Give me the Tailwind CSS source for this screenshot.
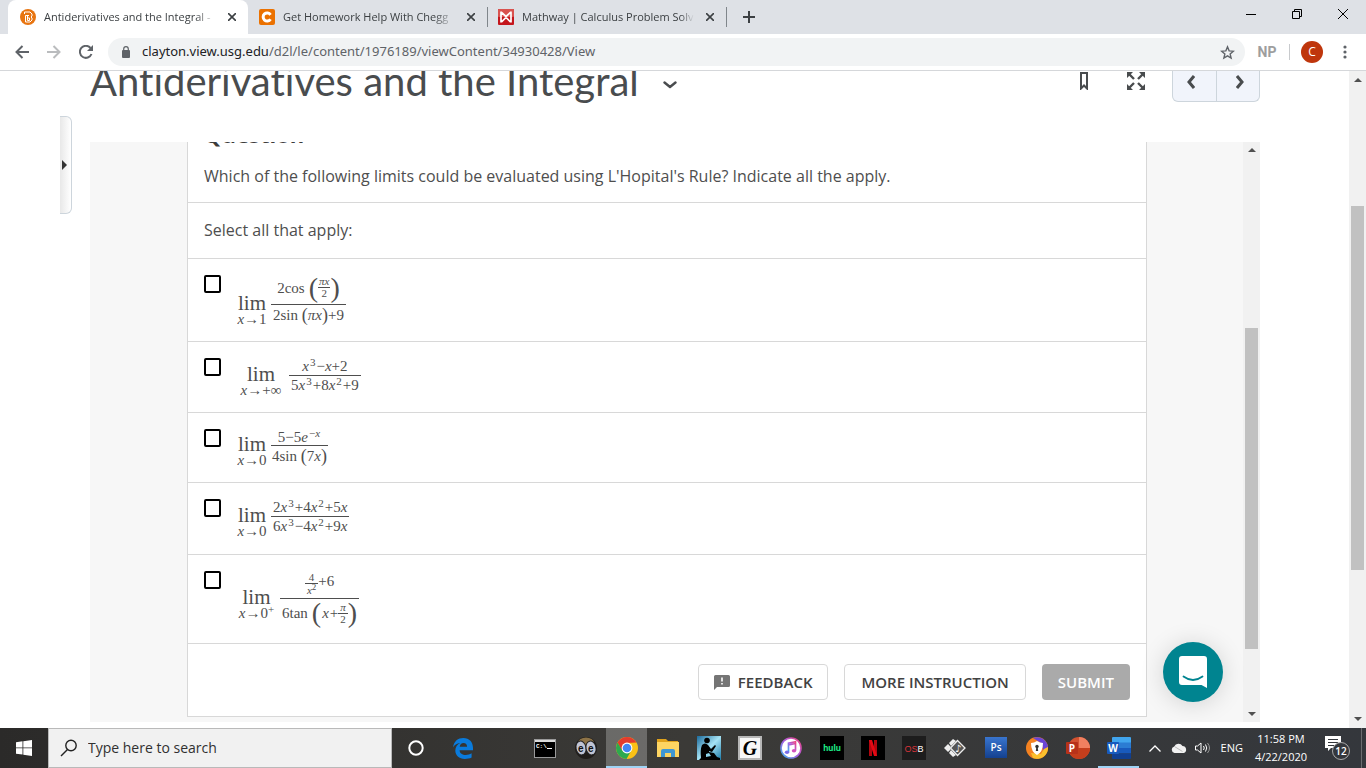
<!DOCTYPE html>
<html lang="en">
  <head>
    <meta charset="UTF-8" />
    <meta name="viewport" content="width=device-width, initial-scale=1.0" />
    <title>Antiderivatives and the Integral</title>
    <script src="https://cdn.jsdelivr.net/npm/@tailwindcss/browser@4"></script>
  </head>
  <body class="flex flex-col h-screen overflow-hidden bg-white font-['Open_Sans',sans-serif]">
    <!-- Tab strip -->
    <header class="shrink-0">
      <div class="flex h-[34px] bg-[#dee1e6] text-[11px] text-[#3c4043]">
        <div class="flex items-center w-[240px] ml-2 pl-3 pr-2 rounded-t-lg bg-white">
          <svg class="w-4 h-4 shrink-0" viewBox="0 0 16 16">
            <circle cx="8" cy="8" r="8" fill="#e87511" />
            <path d="M4.500 3h5.500l2 2v2l-1 1 1 1v2l-2 2H5.500V6.500H9M4.500 3v2M7.500 6.500v5h2V9h-2" fill="none" stroke="#fff" stroke-width="1" />
          </svg>
          <span class="flex-1 ml-2 overflow-hidden whitespace-nowrap [mask-image:linear-gradient(to_right,black_88%,transparent)]">Antiderivatives and the Integral -</span>
          <button class="flex w-4 h-4 ml-2 items-center justify-center" aria-label="Close tab">
            <svg class="w-2 h-2" viewBox="0 0 8 8" stroke="#3c4043" stroke-width="1.600"><path d="M0 0l8 8M8 0L0 8" /></svg>
          </button>
        </div>
        <div class="flex items-center w-[239px] pl-[11px] pr-2">
          <svg class="w-4 h-4 shrink-0" viewBox="0 0 16 16">
            <rect width="16" height="16" rx="2" fill="#eb7100" />
            <path d="M11.500 5.800A4 4 0 1 0 11.500 10.200" fill="none" stroke="#fff" stroke-width="3" />
          </svg>
          <span class="flex-1 ml-2 overflow-hidden whitespace-nowrap [mask-image:linear-gradient(to_right,black_88%,transparent)]">Get Homework Help With Chegg</span>
          <button class="flex w-4 h-4 ml-2 items-center justify-center" aria-label="Close tab">
            <svg class="w-2 h-2" viewBox="0 0 8 8" stroke="#3c4043" stroke-width="1.600"><path d="M0 0l8 8M8 0L0 8" /></svg>
          </button>
        </div>
        <div class="flex items-center w-[240px] h-5 my-[7px] pl-[10px] pr-2 border-x border-[#80868b]">
          <svg class="w-4 h-4 shrink-0" viewBox="0 0 16 16">
            <rect width="16" height="16" rx="1" fill="#c4161c" />
            <rect width="16" height="8" rx="1" fill="#d9534f" />
            <path d="M3 2.500v11M13 2.500v11M3 3l5 4.500L13 3M3.500 13L8 8.500l4.500 4.500" fill="none" stroke="#fff" stroke-width="1.700" />
          </svg>
          <span class="flex-1 ml-2 overflow-hidden whitespace-nowrap [mask-image:linear-gradient(to_right,black_92%,transparent)]">Mathway | Calculus Problem Solv</span>
          <button class="flex w-4 h-4 ml-2 items-center justify-center" aria-label="Close tab">
            <svg class="w-2 h-2" viewBox="0 0 8 8" stroke="#3c4043" stroke-width="1.600"><path d="M0 0l8 8M8 0L0 8" /></svg>
          </button>
        </div>
        <button class="flex w-11 items-center justify-center" aria-label="New tab">
          <svg class="w-3 h-3" viewBox="0 0 12 12" stroke="#3c4043" stroke-width="2"><path d="M6 0v12M0 6h12" /></svg>
        </button>
        <div class="flex ml-auto h-7">
          <button class="flex w-[46px] items-center justify-center" aria-label="Minimize">
            <svg class="w-[10px] h-[10px]" viewBox="0 0 10 10" stroke="#000"><path d="M0 5.500h10" /></svg>
          </button>
          <button class="flex w-[46px] items-center justify-center" aria-label="Restore">
            <svg class="w-[10px] h-[10px]" viewBox="0 0 10 10" fill="none" stroke="#000"><path d="M.5 2.500h7v7h-7zM2.500 2.500v-2h7v7h-2" /></svg>
          </button>
          <button class="flex w-[46px] items-center justify-center" aria-label="Close">
            <svg class="w-[10px] h-[10px]" viewBox="0 0 10 10" stroke="#000"><path d="M0 0l10 10M10 0L0 10" /></svg>
          </button>
        </div>
      </div>
      <!-- Address bar -->
      <div class="flex items-center h-[37px] border-b border-[#d5d7da] pl-2">
        <button class="flex w-7 justify-center" aria-label="Back">
          <svg class="w-[14px] h-[14px]" viewBox="0 0 14 14" fill="none" stroke="#5f6368" stroke-width="2"><path d="M14 7H1.500M7.500 1l-6 6 6 6" /></svg>
        </button>
        <button class="flex w-7 ml-1 justify-center" aria-label="Forward">
          <svg class="w-[14px] h-[14px]" viewBox="0 0 14 14" fill="none" stroke="#babcbe" stroke-width="2"><path d="M0 7h12.500M6.500 1l6 6-6 6" /></svg>
        </button>
        <button class="flex w-7 ml-1 justify-center" aria-label="Reload">
          <svg class="w-[14px] h-[14px]" viewBox="0 0 14 14"><path d="M12.500 9A6 6 0 1 1 11.500 3" fill="none" stroke="#5f6368" stroke-width="2" /><path d="M14 0v6H8z" fill="#5f6368" /></svg>
        </button>
        <div class="flex flex-1 items-center h-7 ml-2 px-3 rounded-full bg-[#f1f3f4] font-['Noto_Sans',sans-serif] text-[13px]">
          <svg class="w-3 h-3" viewBox="0 0 12 12"><rect x="2" y="4" width="8" height="8" rx="1" fill="#5f6368" /><path d="M3.700 5V3a2.300 2.300 0 0 1 4.600 0v2" fill="none" stroke="#5f6368" stroke-width="1.200" /></svg>
          <a href="#" class="ml-[10px] text-[#5f6368]"><span class="text-[#202124]">clayton.view.usg.edu</span>/d2l/le/content/1976189/viewContent/34930428/View</a>
          <svg class="w-[15px] h-[15px] ml-auto -mr-0.5" viewBox="0 0 24 24" fill="none" stroke="#5f6368" stroke-width="2.200"><path d="M12 3l2.600 6.300 6.800.6-5.200 4.400 1.600 6.700-5.800-3.600L6.200 21l1.600-6.700L2.600 9.900l6.800-.6z" /></svg>
        </div>
        <button class="w-11 font-[Roboto] font-bold text-sm text-[#9e9e9e]">NP</button>
        <span class="w-px h-4 bg-[#c8cacd]"></span>
        <button class="w-[22px] h-[22px] ml-[11px] rounded-full bg-[#bf360c] text-xs text-white">C</button>
        <button class="flex w-[43px] justify-center" aria-label="Menu">
          <svg class="w-1 h-[14px]" viewBox="0 0 4 14" fill="#5f6368"><circle cx="2" cy="2" r="1.600" /><circle cx="2" cy="7" r="1.600" /><circle cx="2" cy="12" r="1.600" /></svg>
        </button>
      </div>
    </header>

    <div class="flex flex-1 min-h-0">
      <main class="relative flex flex-col flex-1 min-w-0 pl-[90px] pr-[89px] pb-1.5">
        <!-- Sidebar handle -->
        <button class="absolute left-[60px] top-[45px] flex items-center w-3 h-[98px] rounded-r-md border border-l-0 border-[#cdd5dc] bg-linear-to-r from-[#e8e8e8] to-white" aria-label="Open panel">
          <svg class="w-[5px] h-[10px] ml-0.5" viewBox="0 0 5 10"><path d="M0 0l5 5-5 5z" fill="#333" /></svg>
        </button>

        <div class="flex h-[71px] shrink-0 overflow-hidden text-[#494c4e]">
          <h1 class="-mt-3.5 text-[40px] leading-[48px] font-[Lato] whitespace-nowrap [font-variant-ligatures:none]">Antiderivatives and the Integral</h1>
          <button class="flex h-7 ml-6 items-center" aria-label="Topic menu">
            <svg class="w-[14px] h-2" viewBox="0 0 14 8" fill="none" stroke="#494c4e" stroke-width="2.400" stroke-linecap="round" stroke-linejoin="round"><path d="M1.500 1.500L7 6l5.500-4.500" /></svg>
          </button>
          <div class="flex ml-auto">
            <button class="flex w-2 h-5 items-center" aria-label="Bookmark">
              <svg class="w-2 h-[18px]" viewBox="0 0 8 18" fill="none" stroke="#494c4e" stroke-width="2"><path d="M1 1h6v15.500l-3-3-3 3z" /></svg>
            </button>
            <button class="flex w-[18px] h-5 ml-[39px] items-center" aria-label="Full screen">
              <svg class="w-[18px] h-[18px]" viewBox="0 0 18 18" fill="#494c4e" stroke="#494c4e"><path d="M0 0h6L0 6zM18 0v6l-6-6zM0 18v-6l6 6zM18 18h-6l6-6z" stroke="none" /><path d="M2 2l5 5M16 2l-5 5M2 16l5-5M16 16l-5-5" stroke-width="2.400" /></svg>
            </button>
            <div class="flex h-[31px] ml-[27px] rounded-b-md border border-t-0 border-[#cdd5dc] bg-[#f1f4fb]">
              <button class="flex w-11 pt-1 justify-center border-r border-[#cdd5dc]" aria-label="Previous">
                <svg class="w-2 h-[14px] mr-2" viewBox="0 0 8 14" fill="none" stroke="#494c4e" stroke-width="3"><path d="M7 1L2 7l5 6" /></svg>
              </button>
              <button class="flex w-[42px] pt-1 justify-center" aria-label="Next">
                <svg class="w-2 h-[14px] ml-1" viewBox="0 0 8 14" fill="none" stroke="#494c4e" stroke-width="3"><path d="M1 1l5 6-5 6" /></svg>
              </button>
            </div>
          </div>
        </div>

        <section class="relative flex flex-1 min-h-0 overflow-hidden bg-[#f7f7f7]">
          <form class="flex-1 self-start ml-[97px] mr-24 border border-t-0 border-[#d8d8d8] bg-white text-[#4e4e4e]">
            <div class="flow-root px-4 h-[61px] border-b border-[#d8d8d8]">
              <h2 class="-mt-6 text-[22px] leading-8 font-bold text-[#3c3c3c]">Question</h2>
              <p class="mt-3.5 text-base leading-6">Which of the following limits could be evaluated using L'Hopital's Rule? Indicate all the apply.</p>
            </div>
            <p class="p-4 text-base leading-[23px] border-b border-[#d8d8d8]">Select all that apply:</p>

            <!-- Answers -->
            <div class="font-['Liberation_Serif',serif] text-[15px] leading-4">
              <label class="flex p-4 border-b border-[#d8d8d8]">
                <input type="checkbox" class="appearance-none w-[17px] h-[18px] shrink-0 border-2 border-black rounded-xs" />
                <span class="flex items-end ml-4">
                  <span class="flex flex-col items-center w-[30px]"><span class="text-[21px] leading-5">lim</span><span class="leading-3"><i>x</i>→1</span></span>
                  <span class="flex flex-col items-center ml-1">
                    <span class="flex items-center h-[29px] pb-1">2cos<span class="ml-1 text-[28px] leading-7">(</span><span class="flex flex-col items-center text-[11px] leading-[11px]"><i class="px-px border-b border-[#4e4e4e]">πx</i><span>2</span></span><span class="text-[28px] leading-7">)</span></span>
                    <span class="flex h-[21px] items-center border-t border-[#4e4e4e] px-0.5">2sin&nbsp;<span class="text-lg">(</span><i>πx</i><span class="text-lg">)</span>+9</span>
                  </span>
                </span>
              </label>
              <label class="flex p-4 border-b border-[#d8d8d8]">
                <input type="checkbox" class="appearance-none w-[17px] h-[18px] shrink-0 border-2 border-black rounded-xs" />
                <span class="flex items-end ml-4">
                  <span class="flex flex-col items-center w-12"><span class="text-[21px] leading-5">lim</span><span class="leading-3"><i>x</i>→+∞</span></span>
                  <span class="flex flex-col items-center ml-1">
                    <span class="h-[17px]"><i>x</i><sup class="px-px text-[11px]">3</sup>−<i>x</i>+2</span>
                    <span class="h-[21px] pt-px border-t border-[#4e4e4e] px-0.5">5<i>x</i><sup class="px-px text-[11px]">3</sup>+8<i>x</i><sup class="px-px text-[11px]">2</sup>+9</span>
                  </span>
                </span>
              </label>
              <label class="flex p-4 border-b border-[#d8d8d8]">
                <input type="checkbox" class="appearance-none w-[17px] h-[18px] shrink-0 border-2 border-black rounded-xs" />
                <span class="flex items-end ml-4">
                  <span class="flex flex-col items-center w-[30px]"><span class="text-[21px] leading-5">lim</span><span class="leading-3"><i>x</i>→0</span></span>
                  <span class="flex flex-col items-center ml-1">
                    <span class="h-4">5−5<i>e</i><sup class="px-px text-[11px]">−<i>x</i></sup></span>
                    <span class="flex h-[21px] items-center border-t border-[#4e4e4e] px-px">4sin&nbsp;<span class="text-lg">(</span>7<i>x</i><span class="text-lg">)</span></span>
                  </span>
                </span>
              </label>
              <label class="flex px-4 pt-4 pb-[17px] border-b border-[#d8d8d8]">
                <input type="checkbox" class="appearance-none w-[17px] h-[18px] shrink-0 border-2 border-black rounded-xs" />
                <span class="flex items-end ml-4">
                  <span class="flex flex-col items-center w-[30px]"><span class="text-[21px] leading-5">lim</span><span class="leading-3"><i>x</i>→0</span></span>
                  <span class="flex flex-col items-center ml-1">
                    <span class="h-[17px]">2<i>x</i><sup class="px-px text-[11px]">3</sup>+4<i>x</i><sup class="px-px text-[11px]">2</sup>+5<i>x</i></span>
                    <span class="h-[21px] pt-px border-t border-[#4e4e4e] px-0.5">6<i>x</i><sup class="px-px text-[11px]">3</sup>−4<i>x</i><sup class="px-px text-[11px]">2</sup>+9<i>x</i></span>
                  </span>
                </span>
              </label>
              <label class="flex p-4 border-b border-[#d8d8d8]">
                <input type="checkbox" class="appearance-none w-[17px] h-[18px] shrink-0 border-2 border-black rounded-xs" />
                <span class="flex items-end ml-4">
                  <span class="flex flex-col items-center w-[39px] mb-2"><span class="text-[21px] leading-5">lim</span><span class="leading-3"><i>x</i>→0<sup class="text-[11px]">+</sup></span></span>
                  <span class="flex flex-col items-center ml-1">
                    <span class="flex h-[27px]"><span class="flex flex-col items-center text-[11px] leading-3"><span class="px-1 border-b border-[#4e4e4e]">4</span><span><i>x</i><sup class="text-[9px]">2</sup></span></span><span class="leading-5">+6</span></span>
                    <span class="flex h-[29px] items-center border-t border-[#4e4e4e] px-0.5">6tan<span class="ml-1 text-[28px] leading-7">(</span><i class="px-px">x</i>+<span class="flex flex-col items-center text-[11px] leading-[11px]"><i class="px-0.5 border-b border-[#4e4e4e]">π</i><span>2</span></span><span class="text-[28px] leading-7">)</span></span>
                  </span>
                </span>
              </label>
            </div>

            <div class="flex justify-end gap-4 px-4 pt-5 pb-4 text-[15px] font-semibold">
              <button type="button" class="flex items-center h-9 px-[15px] rounded-sm border border-[#d8d8d8] text-[#424242]">
                <svg class="w-4 h-[15px] mr-2" viewBox="0 0 16 15"><path d="M1.500 0h13Q16 0 16 1.500v9Q16 12 14.500 12H3L0 15V1.500Q0 0 1.500 0z" fill="#757575" /><path d="M8 2.500v4M8 8v1.600" stroke="#fff" stroke-width="1.600" /></svg>
                FEEDBACK
              </button>
              <button type="button" class="h-9 px-4 rounded-sm border border-[#d8d8d8] text-[#424242]">MORE INSTRUCTION</button>
              <button type="button" class="h-9 px-4 rounded-sm bg-[#aaaaaa] text-white">SUBMIT</button>
            </div>
          </form>

          <div class="flex flex-col w-[17px] items-center justify-between bg-[#f1f1f1] py-1.5">
            <svg class="w-2 h-1" viewBox="0 0 8 4"><path d="M0 4l4-4 4 4z" fill="#505050" /></svg>
            <span class="w-[13px] h-[321px] mt-[113px] bg-[#c1c1c1]"></span>
            <svg class="w-2 h-1" viewBox="0 0 8 4"><path d="M0 0l4 4 4-4z" fill="#505050" /></svg>
          </div>

          <button class="absolute right-[37px] bottom-5 flex w-[60px] h-[60px] items-center justify-center rounded-full bg-[#008490] shadow-[0_2px_24px_rgba(0,0,0,0.15)]" aria-label="Open chat">
            <svg class="w-7 h-8" viewBox="0 0 28 32"><path d="M3 0h22a3 3 0 0 1 3 3v29l-5.500-3H3a3 3 0 0 1-3-3V3a3 3 0 0 1 3-3z" fill="#fff" /><path d="M4.500 20.500q9.500 7 19 0" fill="none" stroke="#008490" stroke-width="1.800" stroke-linecap="round" /></svg>
          </button>
        </section>
      </main>

      <div class="flex flex-col w-[17px] items-center justify-between bg-[#f1f1f1] py-[7px]">
        <svg class="w-2 h-1" viewBox="0 0 8 4"><path d="M0 4l4-4 4 4z" fill="#505050" /></svg>
        <span class="w-[13px] h-[364px] -mt-6 bg-[#c1c1c1]"></span>
        <svg class="w-2 h-1" viewBox="0 0 8 4"><path d="M0 0l4 4 4-4z" fill="#505050" /></svg>
      </div>
    </div>

    <!-- Taskbar -->
    <footer class="flex shrink-0 h-10 bg-linear-to-r from-[#2b2a29] via-[#3b3a37] to-[#34373c] text-[11px] text-white">
      <button class="flex w-12 items-center justify-center" aria-label="Start">
        <svg class="w-4 h-4" viewBox="0 0 16 16" fill="#fff"><path d="M0 2.200l6.500-.9v6.200H0zM7.300 1.200L16 0v7.500H7.300zM0 8.300h6.500v6.200L0 13.700zM7.300 8.300H16V16l-8.700-1.200z" /></svg>
      </button>
      <label class="flex items-center w-[344px] border border-[#b9b9b9] bg-[#f1f1f1] pl-[11px]">
        <svg class="w-[18px] h-[18px]" viewBox="0 0 18 18" fill="none" stroke="#222" stroke-width="1.400"><circle cx="11" cy="6.500" r="5.200" /><path d="M7.500 10.500L1 17" /></svg>
        <input type="text" placeholder="Type here to search" aria-label="Type here to search" class="flex-1 ml-2.5 text-sm outline-none placeholder:text-[#303030]" />
      </label>
      <button class="flex w-12 items-center justify-center" aria-label="Cortana">
        <svg class="w-4 h-4" viewBox="0 0 16 16"><circle cx="8" cy="8" r="6.700" fill="none" stroke="#fff" stroke-width="2" /></svg>
      </button>
      <button class="flex w-[46px] items-center justify-center" aria-label="Edge">
        <svg class="w-5 h-[21px]" viewBox="0 0 20 21"><path d="M0 9.500C1 3 5 0 10.300 0 16.500 0 20 4.300 20 10v2.200H6.600c.2 3.300 2.900 4.700 6 4.700 2.300 0 4.300-.6 6-1.600v4.300c-2 1-4.300 1.400-6.700 1.400C6 21 2.300 17.400 2.300 12.600c0-3.300 1.900-6 5-7.500C3.800 5.300 1.200 7.200 0 9.500zM6.700 8.800h7.400c0-2.300-1.300-3.800-3.600-3.800-2.100 0-3.500 1.600-3.800 3.800z" fill="#0a7bdc" /></svg>
      </button>
      <div class="flex ml-[38px]">
        <button class="flex w-[41px] items-center justify-center" aria-label="Command Prompt">
          <svg class="w-[22px] h-[19px]" viewBox="0 0 22 19"><rect x=".5" y=".5" width="21" height="18" fill="#000" stroke="#9a9a9a" /><path d="M1 1h20v2H1z" fill="#dcdcdc" /><text x="2" y="9" font-family="Liberation Mono" font-size="6" font-weight="bold" fill="#fff">C:\</text><path d="M13 9.500h5" stroke="#fff" /></svg>
        </button>
        <button class="flex w-[41px] items-center justify-center" aria-label="Eyes">
          <svg class="w-6 h-6" viewBox="0 0 24 24"><circle cx="12" cy="12" r="11" fill="#201d1a" /><ellipse cx="12" cy="7" rx="8" ry="5.500" fill="#8d7347" /><ellipse cx="7" cy="12" rx="5" ry="7" fill="#bfc4d4" stroke="#222" transform="rotate(-12 7 12)" /><ellipse cx="17" cy="12" rx="5" ry="7" fill="#bfc4d4" stroke="#222" transform="rotate(-12 17 12)" /><text x="4" y="16" font-family="Liberation Sans" font-weight="bold" font-size="10" fill="#111">e</text><text x="14" y="16" font-family="Liberation Sans" font-weight="bold" font-size="10" fill="#111">e</text></svg>
        </button>
        <button class="flex w-[41px] items-center justify-center bg-white/25 border-y-2 border-t-transparent border-b-[#9fd3f5]" aria-label="Chrome">
          <svg class="w-[22px] h-[22px]" viewBox="0 0 22 22"><circle cx="11" cy="11" r="11" fill="#fbc116" /><path d="M1.500 5.500A11 11 0 0 1 20.500 5.500L11 6l-5 8z" fill="#e33b2e" /><path d="M1.500 5.500A11 11 0 0 0 10.500 22L15.300 13.500 11 11 6.300 13.700z" fill="#2da94f" /><circle cx="11" cy="11" r="5.400" fill="#fff" /><circle cx="11" cy="11" r="4.300" fill="#4285f4" /></svg>
        </button>
        <button class="flex w-[41px] items-center justify-center" aria-label="File Explorer">
          <svg class="w-[22px] h-[18px]" viewBox="0 0 22 18"><path d="M0 0h9l2 2h10v3H0z" fill="#e0a21b" /><path d="M0 3h22v15H0z" fill="#fcd462" /><path d="M4 18v-6q0-2 2-2h10q2 0 2 2v6h-4v-4H8v4z" fill="#3f97d3" /></svg>
        </button>
        <button class="flex w-[41px] items-center justify-center" aria-label="Kindle">
          <svg class="w-6 h-6" viewBox="0 0 24 24"><defs><linearGradient id="kindle" x2="1" y2="1"><stop offset="0" stop-color="#1b6a9b" /><stop offset=".5" stop-color="#a5e2f4" /><stop offset="1" stop-color="#1d7ba8" /></linearGradient></defs><rect width="24" height="24" fill="url(#kindle)" /><circle cx="10" cy="4.500" r="2.800" fill="#000" /><path d="M5 9q3-3 6 0l3 4 4-4 1 1-4 6-3-1v1l5 1 3 4 3 1v2H2l2-2q-1-8 1-13z" fill="#000" /><path d="M9 18l3-1 2 3-5 1z" fill="#8dd5ec" /></svg>
        </button>
        <button class="flex w-[41px] items-center justify-center" aria-label="Grammar">
          <svg class="w-6 h-6" viewBox="0 0 24 24"><rect x="1" y="1" width="22" height="22" fill="#f7f7f7" stroke="#b7b7b7" stroke-width="2" /><text x="12" y="19" text-anchor="middle" font-family="Liberation Serif" font-style="italic" font-weight="bold" font-size="20">G</text></svg>
        </button>
        <button class="flex w-[41px] items-center justify-center" aria-label="iTunes">
          <svg class="w-[22px] h-[22px]" viewBox="0 0 22 22"><defs><linearGradient id="tunes" x1="1" x2="0" y2="1"><stop offset="0" stop-color="#f0457f" /><stop offset=".5" stop-color="#a85be0" /><stop offset="1" stop-color="#3cb6f0" /></linearGradient></defs><circle cx="11" cy="11" r="10" fill="#fff" stroke="url(#tunes)" stroke-width="1.600" /><path d="M8.500 15V6.200l7-1.500V13.500M8.500 8l7-1.500" fill="none" stroke="url(#tunes)" stroke-width="1.700" /><ellipse cx="7" cy="15.300" rx="2.200" ry="1.700" fill="#7b6bea" /><ellipse cx="14" cy="13.800" rx="2.200" ry="1.700" fill="#d252bd" /></svg>
        </button>
        <button class="flex w-[41px] items-center justify-center" aria-label="Hulu">
          <svg class="w-6 h-6" viewBox="0 0 24 24"><rect width="24" height="24" fill="#000" /><text x="12" y="15" text-anchor="middle" font-family="Lato" font-weight="900" font-size="9" fill="#1ce783">hulu</text></svg>
        </button>
        <button class="flex w-[41px] items-center justify-center" aria-label="Netflix">
          <svg class="w-6 h-6" viewBox="0 0 24 24"><rect width="24" height="24" fill="#000" /><path d="M8 4h3v16H8zM13 4h3v16h-3z" fill="#b1060f" /><path d="M8 4h3l5 16h-3z" fill="#e50914" /></svg>
        </button>
        <button class="flex w-[41px] items-center justify-center" aria-label="OSB">
          <svg class="w-6 h-6" viewBox="0 0 24 24"><rect width="24" height="24" fill="#1d1d1d" /><text x="12" y="15.500" text-anchor="middle" font-family="Liberation Sans" font-size="9" fill="#d8343a">OS<tspan fill="#fff">B</tspan></text></svg>
        </button>
        <button class="flex w-[41px] items-center justify-center" aria-label="Music notation">
          <svg class="w-[22px] h-[18px]" viewBox="0 0 22 18"><path d="M0 9l4-4 3 3-1 1 1 1-3 3zM5 4l4-4 3 2-5 5zM5 14l4 4 3-2-5-5z" fill="#eee" /><path d="M13.500 1.500L21 9l-7.500 7.500L6.500 9z" fill="#555" stroke="#eee" stroke-width="1.300" /><text x="11" y="13" font-family="DejaVu Sans" font-size="10" fill="#fff">♪</text></svg>
        </button>
        <button class="flex w-[41px] items-center justify-center" aria-label="Photoshop">
          <svg class="w-[22px] h-[22px]" viewBox="0 0 22 22"><defs><linearGradient id="ps" x2="0" y2="1"><stop offset="0" stop-color="#3975cf" /><stop offset="1" stop-color="#14418f" /></linearGradient></defs><rect width="22" height="21" fill="url(#ps)" /><text x="11" y="14" text-anchor="middle" font-family="Open Sans" font-weight="600" font-size="10" fill="#fff">Ps</text></svg>
        </button>
        <button class="flex w-[41px] items-center justify-center" aria-label="Secure Browser">
          <svg class="w-[22px] h-[22px]" viewBox="0 0 22 22"><circle cx="11" cy="11" r="11" fill="#f58220" /><path d="M7 1a11 11 0 0 1 15 9l-4 5-3-9z" fill="#6b45d6" /><path d="M22 10a11 11 0 0 1-15 11l-2-5 10 1 3-5z" fill="#fbc02d" /><path d="M11 4q3 2 6 2 0 9-6 12-6-3-6-12 3 0 6-2z" fill="#fff" /><circle cx="11" cy="9.500" r="1.700" fill="#333" /><path d="M10.300 10h1.400l.5 4h-2.400z" fill="#333" /></svg>
        </button>
        <button class="flex w-[41px] items-center justify-center" aria-label="PowerPoint">
          <svg class="w-6 h-[22px]" viewBox="0 0 24 22"><circle cx="13" cy="11" r="11" fill="#d35230" /><path d="M2 11h22a11 11 0 0 1-22 0z" fill="#c43e1c" /><path d="M13 0v11h11A11 11 0 0 0 13 0z" fill="#f08060" /><rect y="5" width="12" height="12" rx="1" fill="#b7321a" /><text x="6" y="14.500" text-anchor="middle" font-family="Open Sans" font-weight="bold" font-size="10" fill="#fff">P</text></svg>
        </button>
        <button class="flex w-[41px] items-center justify-center border-y-2 border-t-transparent border-b-[#9fd3f5]" aria-label="Word">
          <svg class="w-6 h-[22px]" viewBox="0 0 24 22"><path d="M5 1q0-1 1-1h17q1 0 1 1v5H5z" fill="#41a5ee" /><path d="M5 5.500h19V11H5z" fill="#2b7cd3" /><path d="M5 11h19v5.500H5z" fill="#185abd" /><path d="M5 16.500h19V21q0 1-1 1H6q-1 0-1-1z" fill="#103f91" /><rect y="5" width="12" height="12" rx="1" fill="#185abd" /><text x="6" y="14.500" text-anchor="middle" font-family="Open Sans" font-weight="bold" font-size="10" fill="#fff">W</text></svg>
        </button>
      </div>
      <div class="flex items-center ml-auto">
        <svg class="w-3 h-[7px]" viewBox="0 0 12 7" fill="none" stroke="#fff" stroke-width="1.300"><path d="M.5 6.500L6 1l5.500 5.500" /></svg>
        <svg class="w-4 h-[10px] ml-2.5" viewBox="0 0 16 10"><path d="M3.500 10a3.400 3.400 0 0 1-.3-6.600A4.700 4.700 0 0 1 11.500 3 3.600 3.600 0 0 1 12.700 10z" fill="#f1f1f1" /><path d="M3.500 3.500l8 5" stroke="#bbb" /></svg>
        <svg class="w-4 h-3 ml-2" viewBox="0 0 16 12" fill="none" stroke="#fff"><path d="M.5 4h2L6 1v10L2.500 8h-2zM8.500 4q1.500 2 0 4M10.500 2.500q2.500 3.500 0 7" /><path d="M12.500 1q4 5 0 10" stroke="#999" /></svg>
        <span class="ml-2.5">ENG</span>
        <span class="flex flex-col w-[68px] ml-1 items-center leading-[18px]"><span>11:58 PM</span><span>4/22/2020</span></span>
        <button class="ml-[10px]" aria-label="Notifications">
          <svg class="w-[26px] h-[26px]" viewBox="0 0 26 26"><path d="M0 1h16v12H6l-3 3v-3H0z" fill="#fff" /><path d="M3 4.500h10M3 7.500h10M3 10.500h6" stroke="#34373c" /><circle cx="16" cy="16" r="8.500" fill="#34373c" stroke="#aaa" /><text x="16" y="20" text-anchor="middle" font-family="Open Sans" font-weight="600" font-size="10" fill="#fff">12</text></svg>
        </button>
        <span class="w-px h-10 ml-2.5 mr-1 bg-[#6b6d70]"></span>
      </div>
    </footer>
  </body>
</html>
